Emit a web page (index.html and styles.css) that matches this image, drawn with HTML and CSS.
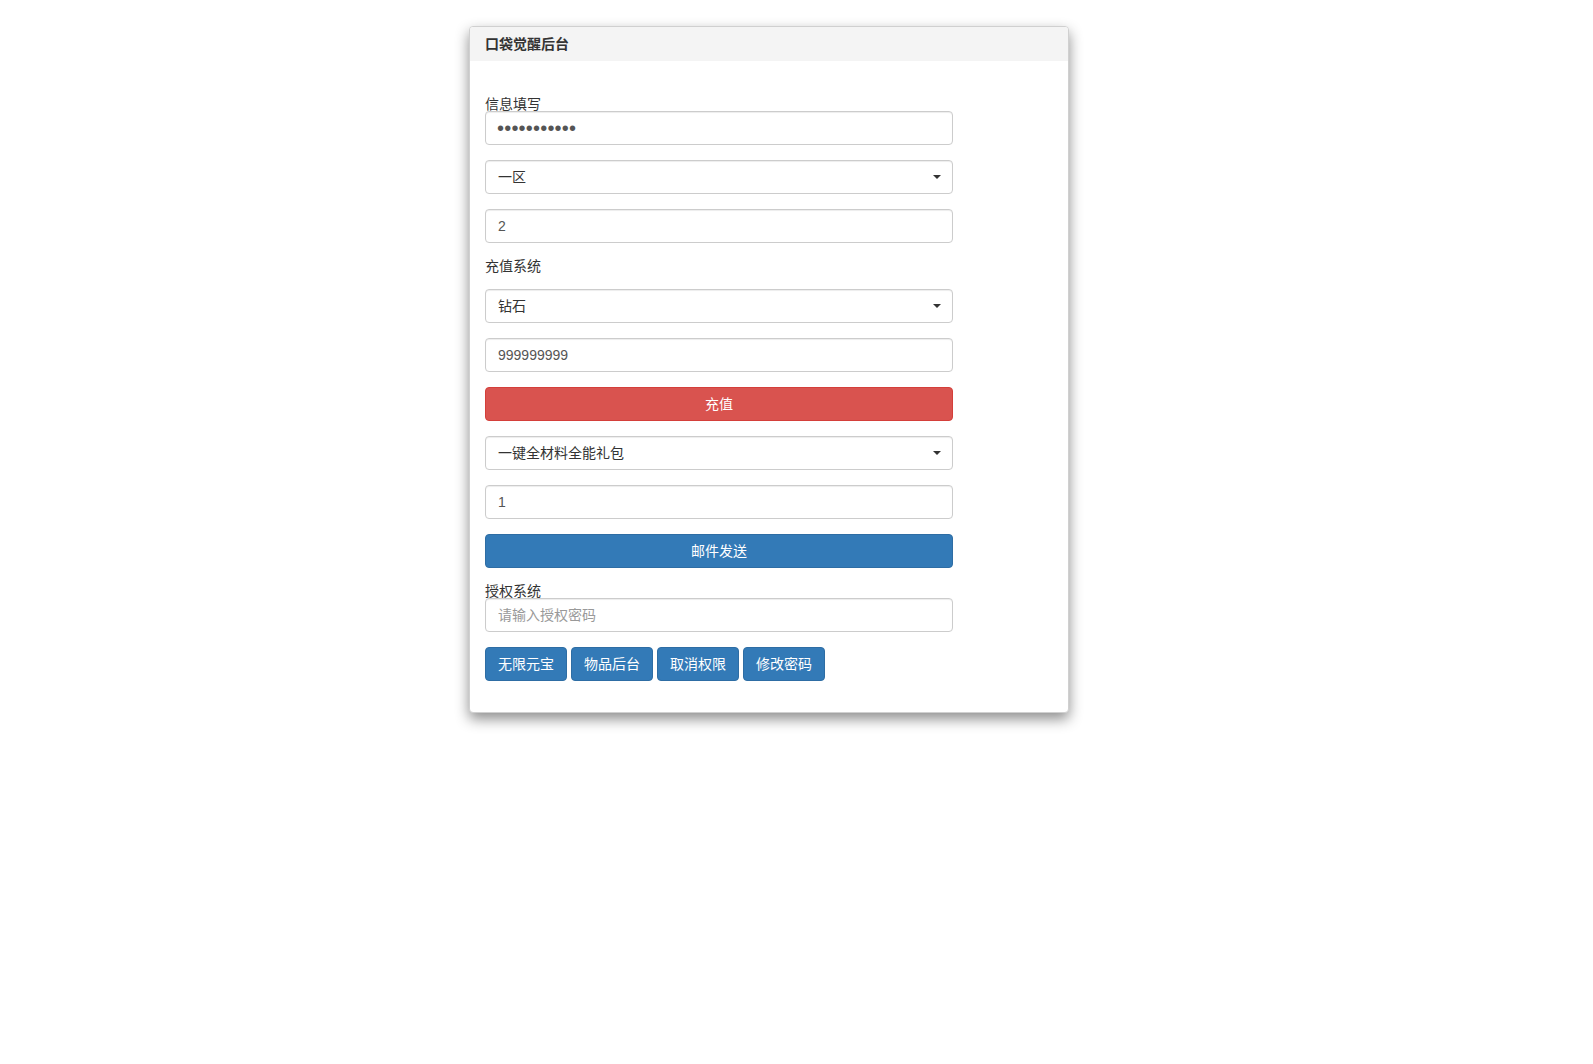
FILE: index.html
```html
<!DOCTYPE html>
<html lang="zh-CN">
<head>
<meta charset="utf-8">
<title>口袋觉醒后台</title>
<link rel="stylesheet" href="styles.css">
</head>
<body>
<div class="panel">
  <div class="panel-heading">口袋觉醒后台</div>
  <div class="panel-body">
    <label class="tight-label">信息填写</label>
    <input class="form-control pw-dots" type="password" value="12345678901">
    <div class="select-wrap">
      <select class="form-control">
        <option>一区</option>
      </select>
    </div>
    <input class="form-control before-label" type="text" value="2">

    <label class="section-label">充值系统</label>
    <div class="select-wrap">
      <select class="form-control">
        <option>钻石</option>
      </select>
    </div>
    <input class="form-control" type="text" value="999999999">
    <button class="btn btn-danger btn-block" type="button">充值</button>
    <div class="select-wrap">
      <select class="form-control">
        <option>一键全材料全能礼包</option>
      </select>
    </div>
    <input class="form-control" type="text" value="1">
    <button class="btn btn-primary btn-block btn-mail" type="button">邮件发送</button>

    <label class="tight-label">授权系统</label>
    <input class="form-control" type="password" placeholder="请输入授权密码">
    <div class="btn-row">
      <button class="btn btn-primary" type="button">无限元宝</button>
      <button class="btn btn-primary" type="button">物品后台</button>
      <button class="btn btn-primary" type="button">取消权限</button>
      <button class="btn btn-primary" type="button">修改密码</button>
    </div>
  </div>
</div>
</body>
</html>
```
FILE: styles.css
```css
* {
  box-sizing: border-box;
}

html {
  background: #fff;
}

body {
  margin: 0;
  min-height: 100vh;
  padding: 26px 0 40px;
  background: #fff;
  font-family: "Liberation Sans", "Noto Sans CJK SC", sans-serif;
  font-size: 14px;
  line-height: 20px;
  color: #333;
}

.panel {
  width: 600px;
  margin: 0 0 0 469px;
  background: #fff;
  border: 1px solid #d0d0d0;
  border-radius: 4px;
  box-shadow: 0 6px 14px rgba(0, 0, 0, 0.45);
}

.panel-heading {
  height: 34px;
  line-height: 34px;
  padding: 0 15px;
  background: #f4f4f4;
  border-radius: 3px 3px 0 0;
  font-weight: bold;
  color: #333;
}

.panel-body {
  padding: 30px 15px 31px;
}

.tight-label {
  display: block;
  width: 468px;
  height: 20px;
  padding-top: 6px;
  line-height: 14px;
  color: #333;
}

.section-label {
  display: block;
  height: 20px;
  line-height: 20px;
  margin-bottom: 13px;
  color: #333;
}

.form-control {
  display: block;
  width: 468px;
  height: 34px;
  margin: 0 0 15px;
  padding: 6px 12px;
  font-family: "Liberation Sans", "Noto Sans CJK SC", sans-serif;
  font-size: 14px;
  line-height: 20px;
  color: #555;
  background: #fff;
  border: 1px solid #ccc;
  border-radius: 4px;
  box-shadow: inset 0 1px 1px rgba(0, 0, 0, 0.075);
  outline: none;
}

.form-control::placeholder {
  color: #999;
}

.form-control.before-label {
  margin-bottom: 13px;
}

.form-control.pw-dots {
  padding-left: 11px;
  font-size: 20px;
  letter-spacing: 0.2px;
}

select.form-control {
  -webkit-appearance: none;
  appearance: none;
  margin-bottom: 0;
  color: #333;
}

.select-wrap {
  position: relative;
  width: 468px;
  margin-bottom: 15px;
}

.select-wrap::after {
  content: "";
  position: absolute;
  right: 12px;
  top: 15px;
  border-top: 4px solid #333;
  border-left: 4px solid transparent;
  border-right: 4px solid transparent;
}

.btn {
  display: inline-block;
  height: 34px;
  padding: 6px 12px;
  font-family: "Liberation Sans", "Noto Sans CJK SC", sans-serif;
  font-size: 14px;
  line-height: 20px;
  color: #fff;
  border: 1px solid transparent;
  border-radius: 4px;
  cursor: pointer;
  white-space: nowrap;
}

.btn-block {
  display: block;
  width: 468px;
  margin-bottom: 15px;
}

.btn-mail {
  margin-bottom: 10px;
}

.btn-danger {
  background: #d9534f;
  border-color: #d43f3a;
}

.btn-primary {
  background: #337ab7;
  border-color: #2e6da4;
}

.btn-row {
  display: flex;
  gap: 4px;
}
```
